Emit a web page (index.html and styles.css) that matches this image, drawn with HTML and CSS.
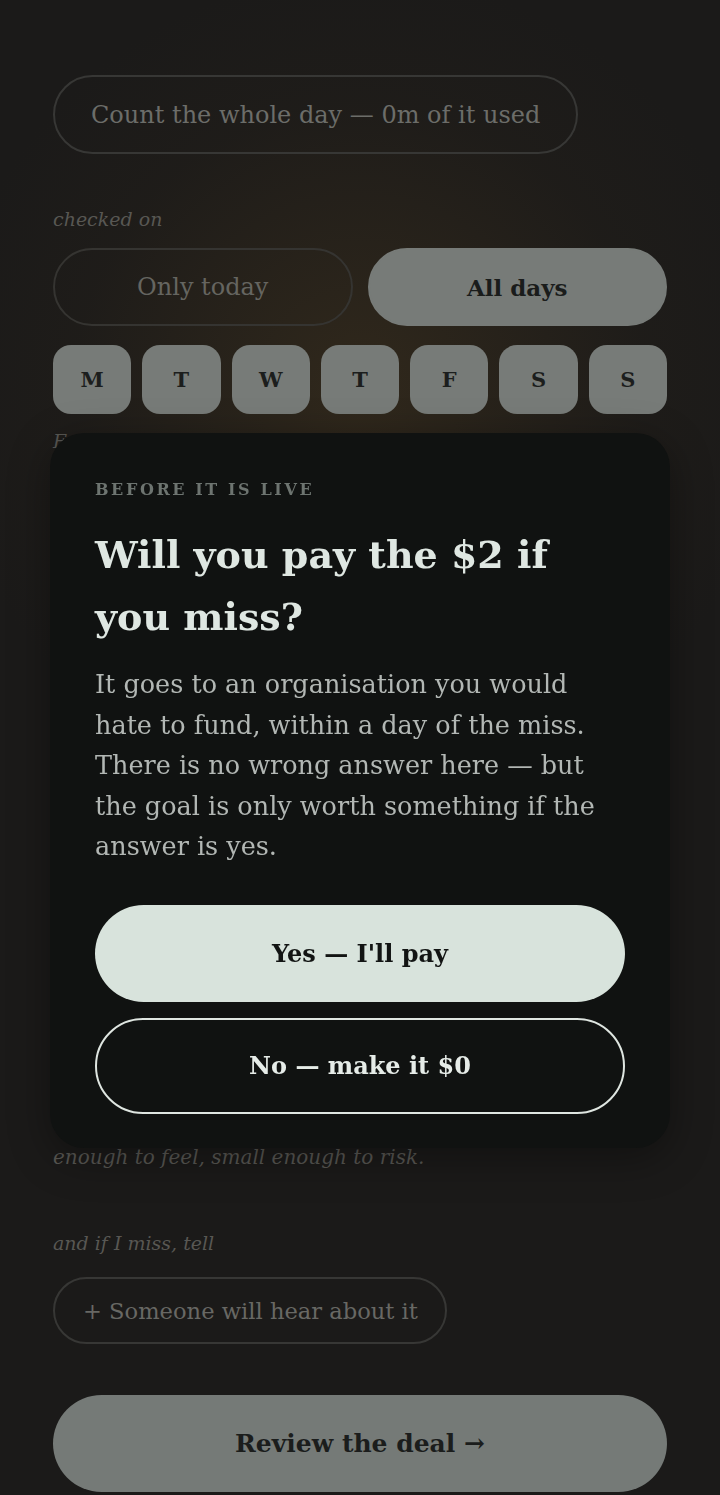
FILE: index.html
```html
<!DOCTYPE html>
<html lang="en">
<head>
<meta charset="utf-8">
<title>Set the deal</title>
<link rel="stylesheet" href="styles.css">
</head>
<body>
<main class="page">
  <div class="pill">Count the whole day — 0m of it used</div>

  <p class="label label-checked">checked on</p>
  <div class="toggle">
    <button class="opt">Only today</button>
    <button class="opt opt-on">All days</button>
  </div>
  <div class="days">
    <span class="day">M</span><span class="day">T</span><span class="day">W</span><span class="day">T</span><span class="day">F</span><span class="day">S</span><span class="day">S</span>
  </div>

  <p class="label label-stake">For each miss, I put down</p>
  <div class="chips">
    <span class="chip">$0</span><span class="chip">$1</span><span class="chip chip-on">$2</span><span class="chip">$5</span>
  </div>
  <div class="amount">$2</div>
  <div class="track"><span class="track-fill"></span></div>
  <p class="hint">Two dollars is a real stake — big<br>enough to feel, small enough to risk.</p>

  <p class="label label-tell">and if I miss, tell</p>
  <div class="pill pill-small">+ Someone will hear about it</div>

  <button class="review">Review the deal →</button>
</main>

<div class="scrim">
  <section class="modal">
    <p class="eyebrow">BEFORE IT IS LIVE</p>
    <h1 class="title">Will you pay the $2 if you miss?</h1>
    <p class="copy">It goes to an organisation you would hate to fund, within a day of the miss. There is no wrong answer here — but the goal is only worth something if the answer is yes.</p>
    <button class="btn btn-yes">Yes — I'll pay</button>
    <button class="btn btn-no">No — make it $0</button>
  </section>
</div>
</body>
</html>
```

FILE: styles.css
```css
* { box-sizing: border-box; }

html, body {
  margin: 0;
  padding: 0;
}

body {
  min-height: 1495px;
  background-color: #1b1a19;
  background-image: radial-gradient(ellipse 520px 520px at 50% 390px, rgba(66, 52, 30, 0.55), rgba(40, 34, 26, 0.25) 55%, rgba(27, 26, 25, 0) 80%);
  background-repeat: no-repeat;
  font-family: "DejaVu Serif", "Liberation Serif", serif;
  overflow: hidden;
}

button {
  font-family: inherit;
  border: 0;
  cursor: pointer;
}

.page {
  padding: 75px 53px 0;
  display: flex;
  flex-direction: column;
  align-items: flex-start;
}

.pill {
  height: 79px;
  padding: 0 36px;
  border: 2px solid #373735;
  border-radius: 40px;
  display: inline-flex;
  align-items: center;
  font-size: 24px;
  color: #6c6d69;
}

.label {
  margin: 0;
  font-style: italic;
  font-size: 19px;
  line-height: 28px;
  color: #585753;
}

.label-checked { margin-top: 51px; }

.toggle {
  margin-top: 15px;
  width: 100%;
  display: grid;
  grid-template-columns: 1fr 1fr;
  gap: 15px;
}

.opt {
  height: 78px;
  border-radius: 39px;
  background: transparent;
  border: 2px solid #353431;
  font-size: 24px;
  color: #656560;
}

.opt-on {
  background: #777b78;
  border-color: #777b78;
  color: #1a1c1b;
  font-weight: 700;
  font-size: 23px;
}

.days {
  margin-top: 19px;
  width: 100%;
  display: grid;
  grid-template-columns: repeat(7, 1fr);
  gap: 11px;
}

.day {
  height: 69px;
  border-radius: 18px;
  background: #777b78;
  display: flex;
  align-items: center;
  justify-content: center;
  font-weight: 700;
  font-size: 21px;
  color: #1c1e1d;
}

.label-stake { margin-top: 13px; }

.chips {
  margin-top: 16px;
  display: flex;
  gap: 11px;
}

.chip {
  width: 110px;
  height: 69px;
  border-radius: 35px;
  border: 2px solid #353431;
  display: flex;
  align-items: center;
  justify-content: center;
  font-size: 22px;
  color: #656560;
}

.chip-on {
  background: #777b78;
  color: #1c1e1d;
  font-weight: 700;
}

.amount {
  margin-top: 40px;
  font-size: 140px;
  line-height: 200px;
  font-weight: 700;
  color: #6c6d69;
}

.track {
  margin-top: 30px;
  width: 100%;
  height: 8px;
  border-radius: 4px;
  background: #353431;
}

.track-fill {
  display: block;
  width: 20%;
  height: 100%;
  border-radius: 4px;
  background: #777b78;
}

.hint {
  margin: 291px 0 0;
  font-style: italic;
  font-size: 20px;
  line-height: 32px;
  color: #585753;
}

.label-tell { margin-top: 56px; }

.pill-small {
  margin-top: 20px;
  height: 67px;
  padding: 0 27px 0 28px;
  border-radius: 34px;
  font-size: 22.6px;
  color: #686864;
}

.review {
  margin-top: 51px;
  width: 100%;
  height: 97px;
  border-radius: 49px;
  background: #757a77;
  font-weight: 700;
  font-size: 25px;
  color: #1b1d1c;
}

/* modal overlay */
.scrim {
  position: fixed;
  inset: 0;
  display: flex;
  flex-direction: column;
  justify-content: center;
  padding: 86px 50px 0;
}

.modal {
  background: #101211;
  border-radius: 34px;
  padding: 47px 45px 34px;
  box-shadow: 0 10px 40px rgba(0, 0, 0, 0.35);
  display: flex;
  flex-direction: column;
}

.eyebrow {
  margin: 0;
  font-size: 16px;
  line-height: 20px;
  font-weight: 700;
  letter-spacing: 2.6px;
  color: #6d7470;
}

.title {
  margin: 24px 0 0;
  font-size: 38px;
  line-height: 62px;
  font-weight: 700;
  color: #dfe7e2;
}

.copy {
  margin: 16px 0 0;
  padding-right: 5px;
  font-size: 25.5px;
  line-height: 40.5px;
  color: #b2b7b4;
}

.btn {
  height: 97px;
  border-radius: 49px;
  font-size: 24px;
  font-weight: 700;
}

.btn-yes {
  margin-top: 38px;
  background: #d8e3dc;
  color: #121413;
}

.btn-no {
  margin-top: 16px;
  height: 96px;
  background: transparent;
  border: 2px solid #dfe6e1;
  color: #e6ece8;
}
```
